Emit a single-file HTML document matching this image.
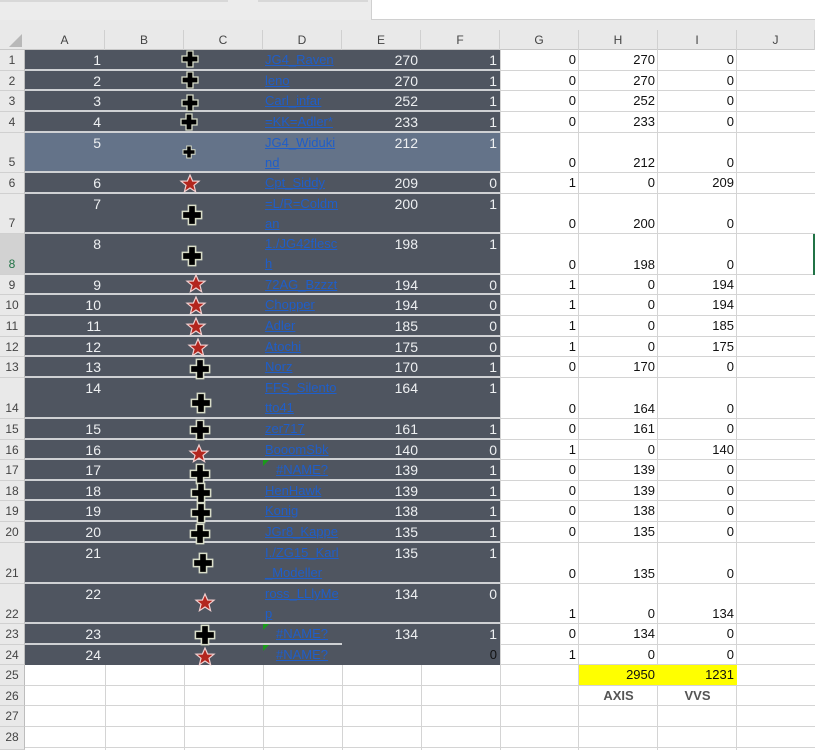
<!DOCTYPE html><html><head><meta charset="utf-8"><style>
*{margin:0;padding:0;box-sizing:border-box}
body{width:815px;height:750px;overflow:hidden;background:#fff;font-family:"Liberation Sans",Arial,sans-serif;position:relative}
.a{position:absolute}
.hd{position:absolute;top:30px;height:20px;line-height:20px;text-align:center;font-size:12px;color:#444;border-right:1px solid #d0d0d0}
.rh{position:absolute;left:0;width:25px;background:#e9e9e9;font-size:12px;color:#444;text-align:center;border-bottom:1px solid #d0d0d0;border-right:1px solid #bdbdbd}
.r{position:absolute;left:25px;width:790px}
.dk{position:absolute;left:0;width:475px;top:0;background:#4f5560;border-bottom:2px solid #cfd1d4}
.c{position:absolute;line-height:20px;font-size:14px;white-space:nowrap}
.w{color:#eef0f2}
.A{left:0;width:76px;text-align:right}
.D{left:240px;width:78px;white-space:normal;word-break:break-all;color:#1f5ec9;text-decoration:underline;font-size:13px}
.E{left:317px;width:76px;text-align:right}
.F{left:396px;width:76px;text-align:right}
.G{left:475px;width:76px;text-align:right;color:#111;font-size:13px}
.H{left:554px;width:76px;text-align:right;color:#111;font-size:13px}
.I{left:633px;width:76px;text-align:right;color:#111;font-size:13px}
.gl{position:absolute;top:0;width:1px;background:#d4d4d4}
.hl{position:absolute;left:475px;width:315px;height:1px;background:#d4d4d4}
.ic{position:absolute}
</style></head><body>
<div class="a" style="left:0;top:0;width:815px;height:30px;background:#ececec"></div>
<div class="a" style="left:0;top:0;width:228px;height:2px;background:#d8d8d8"></div>
<div class="a" style="left:258px;top:0;width:110px;height:2px;background:#d8d8d8"></div>
<div class="a" style="left:371px;top:0;width:444px;height:20px;background:#fff;border-left:1px solid #d0d0d0;border-bottom:1px solid #d0d0d0"></div>
<div class="a" style="left:0;top:20px;width:815px;height:30px;background:#e9e9e9;border-bottom:1px solid #c8c8c8"></div>
<svg class="a" style="left:8px;top:33px" width="15" height="15"><polygon points="14,1 14,14 1,14" fill="#b8b8b8"/></svg>
<div class="hd" style="left:25px;width:80px">A</div><div class="hd" style="left:105px;width:79px">B</div><div class="hd" style="left:184px;width:79px">C</div><div class="hd" style="left:263px;width:79px">D</div><div class="hd" style="left:342px;width:79px">E</div><div class="hd" style="left:421px;width:79px">F</div><div class="hd" style="left:500px;width:79px">G</div><div class="hd" style="left:579px;width:79px">H</div><div class="hd" style="left:658px;width:79px">I</div><div class="hd" style="left:737px;width:78px">J</div>

<!-- grid lines for white area -->
<div class="gl" style="left:500px;top:50px;height:700px"></div>
<div class="gl" style="left:578px;top:50px;height:700px"></div>
<div class="gl" style="left:657px;top:50px;height:700px"></div>
<div class="gl" style="left:736px;top:50px;height:700px"></div>
<div class="gl" style="left:105px;top:665px;height:85px"></div>
<div class="gl" style="left:184px;top:665px;height:85px"></div>
<div class="gl" style="left:263px;top:665px;height:85px"></div>
<div class="gl" style="left:342px;top:665px;height:85px"></div>
<div class="gl" style="left:421px;top:665px;height:85px"></div>

<!-- row headers -->
<div class="rh" style="top:50px;height:21px;line-height:20px">1</div>
<div class="rh" style="top:71px;height:20px;line-height:20px">2</div>
<div class="rh" style="top:91px;height:21px;line-height:20px">3</div>
<div class="rh" style="top:112px;height:21px;line-height:20px">4</div>
<div class="rh" style="top:133px;height:40px;line-height:58px">5</div>
<div class="rh" style="top:173px;height:21px;line-height:20px">6</div>
<div class="rh" style="top:194px;height:40px;line-height:58px">7</div>
<div class="rh" style="top:234px;height:41px;line-height:60px;background:#d2d2d2;color:#217346">8</div>
<div class="rh" style="top:275px;height:20px;line-height:20px">9</div>
<div class="rh" style="top:295px;height:21px;line-height:20px">10</div>
<div class="rh" style="top:316px;height:21px;line-height:20px">11</div>
<div class="rh" style="top:337px;height:20px;line-height:20px">12</div>
<div class="rh" style="top:357px;height:21px;line-height:20px">13</div>
<div class="rh" style="top:378px;height:41px;line-height:60px">14</div>
<div class="rh" style="top:419px;height:21px;line-height:20px">15</div>
<div class="rh" style="top:440px;height:20px;line-height:20px">16</div>
<div class="rh" style="top:460px;height:21px;line-height:20px">17</div>
<div class="rh" style="top:481px;height:20px;line-height:20px">18</div>
<div class="rh" style="top:501px;height:21px;line-height:20px">19</div>
<div class="rh" style="top:522px;height:21px;line-height:20px">20</div>
<div class="rh" style="top:543px;height:41px;line-height:60px">21</div>
<div class="rh" style="top:584px;height:40px;line-height:60px">22</div>
<div class="rh" style="top:624px;height:21px;line-height:20px">23</div>
<div class="rh" style="top:645px;height:20px;line-height:20px">24</div>
<div class="rh" style="top:665px;height:21px;line-height:20px">25</div>
<div class="rh" style="top:686px;height:20px;line-height:20px">26</div>
<div class="rh" style="top:706px;height:21px;line-height:20px">27</div>
<div class="rh" style="top:727px;height:23px;line-height:20px">28</div>

<!-- rows -->
<div class="r" style="top:50px;height:21px"><div class="dk" style="height:21px"></div><div class="hl" style="top:20px"></div><span class="c w A" style="top:0">1</span><span class="c D" style="top:0">JG4_Raven</span><span class="c w E" style="top:0">270</span><span class="c w F" style="top:0">1</span><span class="c G" style="top:0">0</span><span class="c H" style="top:0">270</span><span class="c I" style="top:0">0</span></div>
<div class="r" style="top:71px;height:20px"><div class="dk" style="height:20px"></div><div class="hl" style="top:19px"></div><span class="c w A" style="top:0">2</span><span class="c D" style="top:0">leno</span><span class="c w E" style="top:0">270</span><span class="c w F" style="top:0">1</span><span class="c G" style="top:0">0</span><span class="c H" style="top:0">270</span><span class="c I" style="top:0">0</span></div>
<div class="r" style="top:91px;height:21px"><div class="dk" style="height:21px"></div><div class="hl" style="top:20px"></div><span class="c w A" style="top:0">3</span><span class="c D" style="top:0">Carl_infar</span><span class="c w E" style="top:0">252</span><span class="c w F" style="top:0">1</span><span class="c G" style="top:0">0</span><span class="c H" style="top:0">252</span><span class="c I" style="top:0">0</span></div>
<div class="r" style="top:112px;height:21px"><div class="dk" style="height:21px"></div><div class="hl" style="top:20px"></div><span class="c w A" style="top:0">4</span><span class="c D" style="top:0">=KK=Adler*</span><span class="c w E" style="top:0">233</span><span class="c w F" style="top:0">1</span><span class="c G" style="top:0">0</span><span class="c H" style="top:0">233</span><span class="c I" style="top:0">0</span></div>
<div class="r" style="top:133px;height:40px"><div class="dk" style="height:40px;background:#647389"></div><div class="hl" style="top:39px"></div><span class="c w A" style="top:0">5</span><span class="c D" style="top:0">JG4_Widuki nd</span><span class="c w E" style="top:0">212</span><span class="c w F" style="top:0">1</span><span class="c G" style="top:20px">0</span><span class="c H" style="top:20px">212</span><span class="c I" style="top:20px">0</span></div>
<div class="r" style="top:173px;height:21px"><div class="dk" style="height:21px"></div><div class="hl" style="top:20px"></div><span class="c w A" style="top:0">6</span><span class="c D" style="top:0">Cpt_Siddy</span><span class="c w E" style="top:0">209</span><span class="c w F" style="top:0">0</span><span class="c G" style="top:0">1</span><span class="c H" style="top:0">0</span><span class="c I" style="top:0">209</span></div>
<div class="r" style="top:194px;height:40px"><div class="dk" style="height:40px"></div><div class="hl" style="top:39px"></div><span class="c w A" style="top:0">7</span><span class="c D" style="top:0">=L/R=Coldm an</span><span class="c w E" style="top:0">200</span><span class="c w F" style="top:0">1</span><span class="c G" style="top:20px">0</span><span class="c H" style="top:20px">200</span><span class="c I" style="top:20px">0</span></div>
<div class="r" style="top:234px;height:41px"><div class="dk" style="height:41px"></div><div class="hl" style="top:40px"></div><span class="c w A" style="top:0">8</span><span class="c D" style="top:0">1./JG42flesc h</span><span class="c w E" style="top:0">198</span><span class="c w F" style="top:0">1</span><span class="c G" style="top:21px">0</span><span class="c H" style="top:21px">198</span><span class="c I" style="top:21px">0</span></div>
<div class="r" style="top:275px;height:20px"><div class="dk" style="height:20px"></div><div class="hl" style="top:19px"></div><span class="c w A" style="top:0">9</span><span class="c D" style="top:0">72AG_Bzzzt</span><span class="c w E" style="top:0">194</span><span class="c w F" style="top:0">0</span><span class="c G" style="top:0">1</span><span class="c H" style="top:0">0</span><span class="c I" style="top:0">194</span></div>
<div class="r" style="top:295px;height:21px"><div class="dk" style="height:21px"></div><div class="hl" style="top:20px"></div><span class="c w A" style="top:0">10</span><span class="c D" style="top:0">Chopper</span><span class="c w E" style="top:0">194</span><span class="c w F" style="top:0">0</span><span class="c G" style="top:0">1</span><span class="c H" style="top:0">0</span><span class="c I" style="top:0">194</span></div>
<div class="r" style="top:316px;height:21px"><div class="dk" style="height:21px"></div><div class="hl" style="top:20px"></div><span class="c w A" style="top:0">11</span><span class="c D" style="top:0">Adler</span><span class="c w E" style="top:0">185</span><span class="c w F" style="top:0">0</span><span class="c G" style="top:0">1</span><span class="c H" style="top:0">0</span><span class="c I" style="top:0">185</span></div>
<div class="r" style="top:337px;height:20px"><div class="dk" style="height:20px"></div><div class="hl" style="top:19px"></div><span class="c w A" style="top:0">12</span><span class="c D" style="top:0">Atochi</span><span class="c w E" style="top:0">175</span><span class="c w F" style="top:0">0</span><span class="c G" style="top:0">1</span><span class="c H" style="top:0">0</span><span class="c I" style="top:0">175</span></div>
<div class="r" style="top:357px;height:21px"><div class="dk" style="height:21px"></div><div class="hl" style="top:20px"></div><span class="c w A" style="top:0">13</span><span class="c D" style="top:0">Norz</span><span class="c w E" style="top:0">170</span><span class="c w F" style="top:0">1</span><span class="c G" style="top:0">0</span><span class="c H" style="top:0">170</span><span class="c I" style="top:0">0</span></div>
<div class="r" style="top:378px;height:41px"><div class="dk" style="height:41px"></div><div class="hl" style="top:40px"></div><span class="c w A" style="top:0">14</span><span class="c D" style="top:0">FFS_Silento tto41</span><span class="c w E" style="top:0">164</span><span class="c w F" style="top:0">1</span><span class="c G" style="top:21px">0</span><span class="c H" style="top:21px">164</span><span class="c I" style="top:21px">0</span></div>
<div class="r" style="top:419px;height:21px"><div class="dk" style="height:21px"></div><div class="hl" style="top:20px"></div><span class="c w A" style="top:0">15</span><span class="c D" style="top:0">zer717</span><span class="c w E" style="top:0">161</span><span class="c w F" style="top:0">1</span><span class="c G" style="top:0">0</span><span class="c H" style="top:0">161</span><span class="c I" style="top:0">0</span></div>
<div class="r" style="top:440px;height:20px"><div class="dk" style="height:20px"></div><div class="hl" style="top:19px"></div><span class="c w A" style="top:0">16</span><span class="c D" style="top:0">BooomSbk</span><span class="c w E" style="top:0">140</span><span class="c w F" style="top:0">0</span><span class="c G" style="top:0">1</span><span class="c H" style="top:0">0</span><span class="c I" style="top:0">140</span></div>
<div class="r" style="top:460px;height:21px"><div class="dk" style="height:21px"></div><div class="hl" style="top:20px"></div><span class="c w A" style="top:0">17</span><span class="c D" style="top:0;left:251px">#NAME?</span><span class="c w E" style="top:0">139</span><span class="c w F" style="top:0">1</span><span class="c G" style="top:0">0</span><span class="c H" style="top:0">139</span><span class="c I" style="top:0">0</span></div>
<div class="r" style="top:481px;height:20px"><div class="dk" style="height:20px"></div><div class="hl" style="top:19px"></div><span class="c w A" style="top:0">18</span><span class="c D" style="top:0">HenHawk</span><span class="c w E" style="top:0">139</span><span class="c w F" style="top:0">1</span><span class="c G" style="top:0">0</span><span class="c H" style="top:0">139</span><span class="c I" style="top:0">0</span></div>
<div class="r" style="top:501px;height:21px"><div class="dk" style="height:21px"></div><div class="hl" style="top:20px"></div><span class="c w A" style="top:0">19</span><span class="c D" style="top:0">Konig</span><span class="c w E" style="top:0">138</span><span class="c w F" style="top:0">1</span><span class="c G" style="top:0">0</span><span class="c H" style="top:0">138</span><span class="c I" style="top:0">0</span></div>
<div class="r" style="top:522px;height:21px"><div class="dk" style="height:21px"></div><div class="hl" style="top:20px"></div><span class="c w A" style="top:0">20</span><span class="c D" style="top:0">JGr8_Kappe</span><span class="c w E" style="top:0">135</span><span class="c w F" style="top:0">1</span><span class="c G" style="top:0">0</span><span class="c H" style="top:0">135</span><span class="c I" style="top:0">0</span></div>
<div class="r" style="top:543px;height:41px"><div class="dk" style="height:41px"></div><div class="hl" style="top:40px"></div><span class="c w A" style="top:0">21</span><span class="c D" style="top:0">I./ZG15_Karl _Modeller</span><span class="c w E" style="top:0">135</span><span class="c w F" style="top:0">1</span><span class="c G" style="top:21px">0</span><span class="c H" style="top:21px">135</span><span class="c I" style="top:21px">0</span></div>
<div class="r" style="top:584px;height:40px"><div class="dk" style="height:40px"></div><div class="hl" style="top:39px"></div><span class="c w A" style="top:0">22</span><span class="c D" style="top:0">ross_LLlyMe p</span><span class="c w E" style="top:0">134</span><span class="c w F" style="top:0">0</span><span class="c G" style="top:20px">1</span><span class="c H" style="top:20px">0</span><span class="c I" style="top:20px">134</span></div>
<div class="r" style="top:624px;height:21px"><div class="dk" style="height:21px;border-bottom:none"></div><div class="a" style="left:0;top:19px;width:317px;height:2px;background:#cfd1d4"></div><div class="hl" style="top:20px"></div><span class="c w A" style="top:0">23</span><span class="c D" style="top:0;left:251px">#NAME?</span><span class="c w E" style="top:0">134</span><span class="c w F" style="top:0">1</span><span class="c G" style="top:0">0</span><span class="c H" style="top:0">134</span><span class="c I" style="top:0">0</span></div>
<div class="r" style="top:645px;height:20px"><div class="dk" style="height:20px;border-bottom:none"></div><div class="hl" style="top:19px"></div><span class="c w A" style="top:0">24</span><span class="c D" style="top:0;left:251px">#NAME?</span><span class="c F" style="top:0;color:#111;font-size:13px">0</span><span class="c G" style="top:0">1</span><span class="c H" style="top:0">0</span><span class="c I" style="top:0">0</span></div>
<div class="r" style="top:665px;height:21px"><div class="a" style="left:554px;top:0;width:158px;height:20px;background:#ffff00"></div><div class="a" style="left:0;top:20px;width:790px;height:1px;background:#d4d4d4"></div><span class="c H" style="top:0">2950</span><span class="c I" style="top:0">1231</span></div>
<div class="r" style="top:686px;height:20px"><div class="a" style="left:0;top:19px;width:790px;height:1px;background:#d4d4d4"></div><span class="c" style="left:554px;width:79px;text-align:center;top:0;font-size:13px;font-weight:bold;color:#555">AXIS</span><span class="c" style="left:633px;width:79px;text-align:center;top:0;font-size:13px;font-weight:bold;color:#555">VVS</span></div>
<div class="a" style="left:25px;top:726px;width:790px;height:1px;background:#d4d4d4"></div>
<div class="a" style="left:25px;top:747px;width:790px;height:1px;background:#d4d4d4"></div>

<!-- green corners for #NAME? -->
<svg class="a" style="left:263px;top:460px" width="6" height="6"><polygon points="0,0 6,0 0,6" fill="#1a9a1a"/></svg>
<svg class="a" style="left:263px;top:624px" width="6" height="6"><polygon points="0,0 6,0 0,6" fill="#1a9a1a"/></svg>
<svg class="a" style="left:263px;top:645px" width="6" height="6"><polygon points="0,0 6,0 0,6" fill="#1a9a1a"/></svg>
<!-- selected row 8 marker -->
<div class="a" style="left:813px;top:234px;width:2px;height:41px;background:#217346"></div>

<!-- icons -->
<svg width="0" height="0" style="position:absolute"><defs>
<g id="cr"><path d="M-3,-8 H3 V-3 H8 V3 H3 V8 H-3 V3 H-8 V-3 H-3 Z" fill="#000" stroke="#d8dcc8" stroke-width="1.3"/></g>
<g id="st"><path d="M0,-9 L2.6,-3 L9,-2.8 L4,1.3 L5.6,7.7 L0,4 L-5.6,7.7 L-4,1.3 L-9,-2.8 L-2.6,-3 Z" fill="#b3261e" stroke="#f2d0d0" stroke-width="1.2"/></g>
</defs></svg>
<svg class="a" style="left:0;top:0" width="815" height="750">
<use href="#cr" transform="translate(190,59)"/>
<use href="#cr" transform="translate(190,80)"/>
<use href="#cr" transform="translate(190,103)"/>
<use href="#cr" transform="translate(189,122)"/>
<use href="#cr" transform="translate(189,152) scale(0.75)"/>
<use href="#st" transform="translate(190,184)"/>
<use href="#cr" transform="translate(192,215) scale(1.2)"/>
<use href="#cr" transform="translate(192,256) scale(1.2)"/>
<use href="#st" transform="translate(196,284)"/>
<use href="#st" transform="translate(196,306)"/>
<use href="#st" transform="translate(196,327)"/>
<use href="#st" transform="translate(198,348)"/>
<use href="#cr" transform="translate(200,369) scale(1.2)"/>
<use href="#cr" transform="translate(201,403) scale(1.2)"/>
<use href="#cr" transform="translate(200,430) scale(1.2)"/>
<use href="#st" transform="translate(199,454)"/>
<use href="#cr" transform="translate(200,474) scale(1.2)"/>
<use href="#cr" transform="translate(201,493) scale(1.2)"/>
<use href="#cr" transform="translate(201,513) scale(1.2)"/>
<use href="#cr" transform="translate(200,534) scale(1.2)"/>
<use href="#cr" transform="translate(203,563) scale(1.2)"/>
<use href="#st" transform="translate(205,603)"/>
<use href="#cr" transform="translate(205,635) scale(1.2)"/>
<use href="#st" transform="translate(205,657)"/>
</svg>
</body></html>
